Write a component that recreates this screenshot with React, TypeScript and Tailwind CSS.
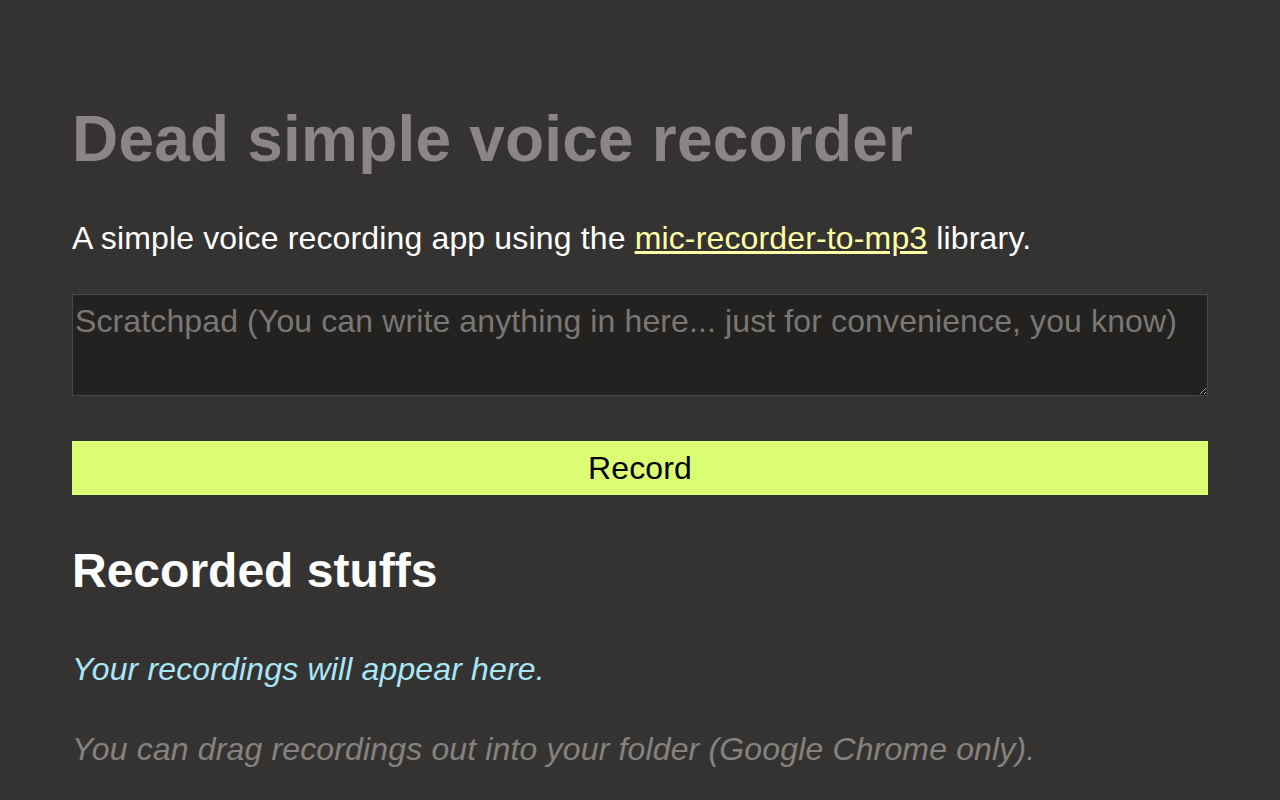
export default function App() {
  return (
    <div className="min-h-screen w-full bg-[#353331] px-[72px] pt-[107px] pb-10 font-['Liberation_Sans',Arial,sans-serif] tracking-[0.15px]">
      <h1 className="text-[64px] font-bold leading-none text-[#8b8685] tracking-[0.2px]">Dead simple voice recorder</h1>
      <p className="mt-[51px] text-[32px] leading-none text-white">
        A simple voice recording app using the{" "}
        <a href="#" className="text-[#ffffa5] underline">mic-recorder-to-mp3</a> library.
      </p>
      <textarea
        className="mt-[40px] block h-[102px] w-full border border-[#4a4846] bg-[#232220] px-[2px] pt-[10px] text-[32px] leading-none tracking-[0.12px] text-white placeholder:text-[#7a7775] outline-none"
        placeholder="Scratchpad (You can write anything in here... just for convenience, you know)"
      />
      <button className="mt-[45px] block h-[54px] w-full bg-[#dafd72] text-[32px] leading-none text-black">Record</button>
      <h2 className="mt-[52px] text-[48px] font-bold leading-none text-white tracking-normal">Recorded stuffs</h2>
      <p className="mt-[58px] text-[32px] italic leading-none text-[#a8e6f8]">Your recordings will appear here.</p>
      <p className="mt-[48px] text-[32px] italic leading-none text-[#858280]">You can drag recordings out into your folder (Google Chrome only).</p>
    </div>
  );
}
